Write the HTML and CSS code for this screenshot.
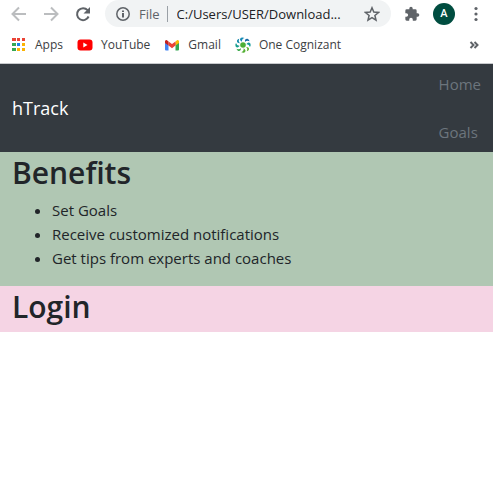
FILE: index.html
```html
<!DOCTYPE html>
<html lang="en">
<head>
<meta charset="utf-8">
<meta name="viewport" content="width=device-width, initial-scale=1">
<title>hTrack</title>
<link rel="stylesheet" href="styles.css">
</head>
<body>
<header class="browser">
  <div class="toolbar">
    <div class="nav-buttons">
      <button class="icon-button disabled" aria-label="Back"><svg viewBox="0 0 16 16"><path d="M15 8H2M8 1.500L1.500 8L8 14.500"/></svg></button>
      <button class="icon-button disabled" aria-label="Forward"><svg viewBox="0 0 16 16"><path d="M1 8H14M8 1.500L14.500 8L8 14.500"/></svg></button>
      <button class="icon-button" aria-label="Reload"><svg viewBox="0 0 16 16"><path d="M13.600 10.500A6 6 0 1 1 12.600 4.200"/><path class="solid" d="M15 1V7.500H8.500Z"/></svg></button>
    </div>
    <div class="address">
      <svg class="info" viewBox="0 0 14 14" aria-hidden="true"><circle cx="7" cy="7" r="6.200"/><path d="M7 6V10.500M7 3.500V5"/></svg>
      <span class="scheme">File</span>
      <input class="url" type="text" aria-label="Address" value="C:/Users/USER/Download...">
      <button class="icon-button star" aria-label="Bookmark this page"><svg viewBox="0 0 16 16"><path d="M8 1.800L9.800 6.100L14.500 6.500L10.900 9.500L12 14.100L8 11.600L4 14.100L5.100 9.500L1.500 6.500L6.200 6.100Z"/></svg></button>
    </div>
    <div class="actions">
      <button class="icon-button" aria-label="Extensions"><svg viewBox="0 0 24 24"><path class="solid" d="M20.500 11H19V7a2 2 0 0 0-2-2h-4V3.500a2.500 2.500 0 0 0-5 0V5H4a2 2 0 0 0-2 2v3.800h1.500a2.700 2.700 0 0 1 0 5.400H2V20a2 2 0 0 0 2 2h3.800v-1.500a2.700 2.700 0 0 1 5.400 0V22H17a2 2 0 0 0 2-2v-4h1.500a2.500 2.500 0 0 0 0-5Z"/></svg></button>
      <button class="avatar" aria-label="Profile A">A</button>
      <button class="icon-button" aria-label="Menu"><svg viewBox="0 0 16 16"><g class="solid"><circle cx="8" cy="2.500" r="1.600"/><circle cx="8" cy="8" r="1.600"/><circle cx="8" cy="13.500" r="1.600"/></g></svg></button>
    </div>
  </div>
  <nav class="bookmarks" aria-label="Bookmarks">
    <a href="#apps"><svg viewBox="0 0 16 16" aria-hidden="true"><path fill="#ea4335" d="M1 1h4v3H1zM6 1h3v3H6zM11 1h3v3h-3z"/><path fill="#34a853" d="M1 6h4v3H1zM1 11h4v3H1z"/><path fill="#1a82e8" d="M6 6h3v3H6z"/><path fill="#fbb304" d="M11 6h3v3h-3zM6 11h3v3H6zM11 11h3v3h-3z"/></svg>Apps</a>
    <a href="#youtube"><svg viewBox="0 0 16 16" aria-hidden="true"><rect x="0.500" y="2.500" width="15" height="11" rx="3" fill="#f00"/><path fill="#fff" d="M6.300 5.500L10.500 8L6.300 10.500Z"/></svg>YouTube</a>
    <a href="#gmail"><svg viewBox="0 0 16 16" aria-hidden="true"><path fill="#4285f4" d="M1 4l3.500 2v7.500H2a1 1 0 0 1-1-1z"/><path fill="#34a853" d="M15 4l-3.500 2v7.500H14a1 1 0 0 0 1-1z"/><path fill="#fbbc04" d="M11.500 4.500L13 3.300a1.300 1.300 0 0 1 2 1.100V6l-3.500 2.600z"/><path fill="#c5221f" d="M1 6V4.400a1.300 1.300 0 0 1 2-1.100l1.500 1.200v4.100z"/><path fill="#ea4335" d="M4.500 8.600V4.500L8 7.100l3.500-2.600v4.100L8 11.200z"/></svg>Gmail</a>
    <a href="#cognizant"><svg viewBox="0 0 16 16" aria-hidden="true"><circle cx="8" cy="8" r="2.800" fill="#4caf36"/><path fill="#168bb5" d="M7 4.800Q3.500 3 6 .8Q8 0 9.500 1Q6.500 2 7 4.800Z"/><path fill="#1769a5" d="M10 5Q9.500 1.500 12.500 1.800Q14.300 2.500 14.500 4.200Q11.500 3 10 5Z"/><path fill="#159c9a" d="M11.300 7.200Q13.500 4.200 15.500 6.800Q16 8.500 15 10Q14 6.800 11.300 7.200Z"/><path fill="#62b535" d="M11 10Q14.500 9.800 14 12.500Q13.300 14 11.700 14.300Q13 11.500 11 10Z"/><path fill="#55b035" d="M8.500 11.300Q12 13.500 9.500 15.500Q8 16 6.300 15.200Q9.300 14 8.500 11.300Z"/><path fill="#38a747" d="M6 11Q6 14.500 3.300 14Q1.800 13.300 1.500 11.700Q4.500 13 6 11Z"/><path fill="#179d8f" d="M4.700 8.800Q2.500 11.800 .5 9.200Q0 7.500 1 6Q2 9.200 4.700 8.800Z"/><path fill="#1688aa" d="M5 6.200Q1.500 6.200 2 3.500Q2.700 2 4.300 1.700Q3 4.500 5 6.200Z"/></svg>One Cognizant</a>
    <button class="icon-button more" aria-label="More bookmarks"><svg viewBox="0 0 10 10"><path d="M1.500 2L4.500 5L1.500 8M5.500 2L8.500 5L5.500 8"/></svg></button>
  </nav>
</header>
<nav class="site-nav">
  <a class="brand" href="#top">hTrack</a>
  <ul class="site-links">
    <li><a href="#home">Home</a></li>
    <li><a href="#goals">Goals</a></li>
  </ul>
</nav>
<main>
  <section class="panel benefits">
    <h2>Benefits</h2>
    <ul>
      <li>Set Goals</li>
      <li>Receive customized notifications</li>
      <li>Get tips from experts and coaches</li>
    </ul>
  </section>
  <section class="panel login">
    <h2>Login</h2>
  </section>
</main>
</body>
</html>
```

FILE: styles.css
```css
* { box-sizing: border-box; }

body {
  margin: 0;
  background: #fff;
  color: #212529;
  font: 15px/24px "Segoe UI", "Open Sans", sans-serif;
}

a { color: inherit; text-decoration: none; }

button {
  padding: 0;
  border: 0;
  background: none;
  font: inherit;
}

.browser {
  border-bottom: 1px solid #c8cacd;
  color: #3c4043;
  font-size: 12px;
}

.toolbar {
  display: flex;
  align-items: center;
  height: 27px;
  padding-right: 9px;
}

.nav-buttons {
  display: flex;
  gap: 16px;
  padding: 0 14px 0 11px;
}

.icon-button {
  display: block;
  flex: none;
  width: 16px;
  height: 16px;
  color: #5f6368;
}

.icon-button svg {
  display: block;
  width: 100%;
  height: 100%;
  fill: none;
  stroke: currentColor;
  stroke-width: 2;
}

.icon-button .solid { fill: currentColor; stroke: none; }
.disabled { color: #bbbdbf; }

.address {
  display: flex;
  flex: 1;
  align-items: center;
  min-width: 0;
  height: 27px;
  padding: 0 11px;
  border-radius: 14px;
  background: #f1f3f4;
}

.info {
  flex: none;
  width: 14px;
  height: 14px;
  margin-right: 9px;
  fill: none;
  stroke: #5f6368;
  stroke-width: 2;
}

.info circle { stroke-width: 1.5; }

.scheme {
  padding-right: 7px;
  border-right: 1px solid #9aa0a6;
  color: #5f6368;
  font-size: 13px;
  line-height: 16px;
}

.url {
  flex: 1;
  min-width: 0;
  padding: 0 0 0 9px;
  border: 0;
  outline: 0;
  background: none;
  color: #202124;
  font: inherit;
  font-size: 13px;
}

.star svg { stroke-width: 1.5; }

.actions {
  display: flex;
  align-items: center;
  gap: 13px;
  padding-left: 13px;
}

.avatar {
  width: 22px;
  height: 22px;
  border-radius: 50%;
  background: #004d40;
  color: #fff;
  font: 500 11px/22px Roboto, sans-serif;
}

.bookmarks {
  display: flex;
  align-items: center;
  gap: 14px;
  height: 36px;
  padding: 0 14px 0 11px;
}

.bookmarks a {
  display: flex;
  align-items: center;
  gap: 8px;
  white-space: nowrap;
}

.bookmarks a svg { flex: none; width: 16px; height: 16px; }

.more { width: 10px; height: 10px; margin-left: auto; }

.site-nav {
  display: flex;
  align-items: center;
  justify-content: space-between;
  padding: 0 12px;
  background: #343a40;
}

.brand { color: #fff; font-size: 18px; }

.site-links {
  margin: 0;
  padding: 8px 0;
  color: #6c757d;
  list-style: none;
}

.site-links li + li { margin-top: 24px; }

.panel { padding: 0 12px; }

.panel h2 {
  margin: 0;
  padding-bottom: 4px;
  font-size: 30px;
  font-weight: 600;
  line-height: 42px;
}

.panel ul { margin: 0; padding: 0 0 16px 40px; }

.benefits { background: #b0c7b3; }
.login { background: #f5d4e4; }
```
